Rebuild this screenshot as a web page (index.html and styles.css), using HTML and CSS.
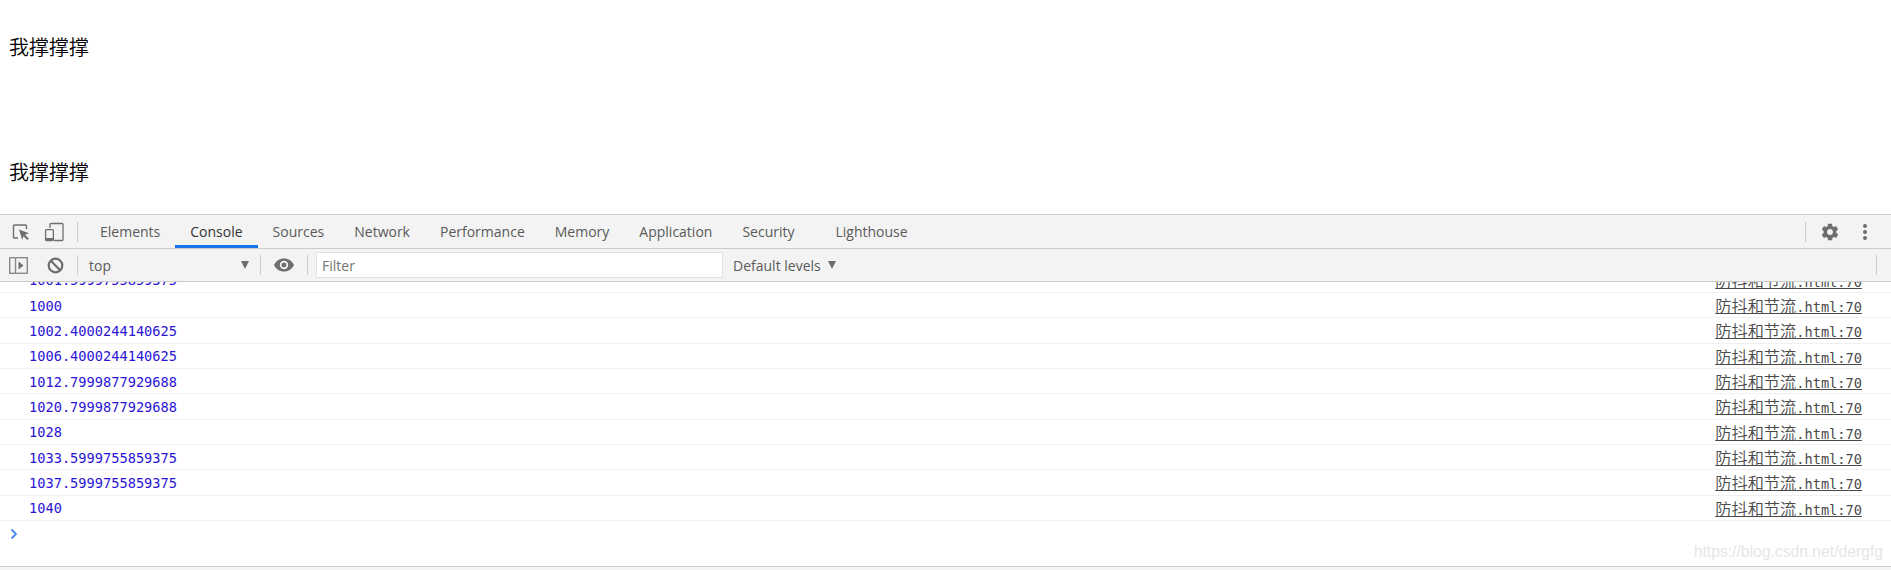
FILE: index.html
```html
<!DOCTYPE html>
<html lang="zh">
<head>
<meta charset="utf-8">
<title>防抖和节流</title>
<link rel="stylesheet" href="styles.css">
</head>
<body>
<main class="page">
  <p class="para">我撑撑撑</p>
  <p class="para">我撑撑撑</p>
</main>
<section class="devtools">
  <div class="tabbar">
    <svg class="ico ico-inspect" width="18" height="18" viewBox="0 0 18 18"><path d="M6 15H2.5a1 1 0 0 1-1-1V3a1 1 0 0 1 1-1h11a1 1 0 0 1 1 1v3" fill="none" stroke="#6e6e6e" stroke-width="1.4"/><path d="M7 6.5l10 3.7-4 1.6 3.8 3.8-1.5 1.5-3.8-3.8-1.3 3.8z" fill="#6e6e6e"/></svg>
    <svg class="ico ico-device" width="20" height="20" viewBox="0 0 20 20"><path d="M6 6V2.5a1 1 0 0 1 1-1h11a1 1 0 0 1 1 1v15a1 1 0 0 1-1 1H10" fill="none" stroke="#6e6e6e" stroke-width="1.3"/><rect x="1.6" y="7.6" width="7.8" height="11" rx="1" fill="none" stroke="#6e6e6e" stroke-width="1.3"/><rect x="2" y="16" width="7" height="2.5" fill="#6e6e6e"/></svg>
    <span class="sep"></span>
    <nav class="tabs">
      <span class="tab">Elements</span>
      <span class="tab tab-active">Console</span>
      <span class="tab">Sources</span>
      <span class="tab">Network</span>
      <span class="tab">Performance</span>
      <span class="tab">Memory</span>
      <span class="tab">Application</span>
      <span class="tab">Security</span>
      <span class="tab tab-last">Lighthouse</span>
    </nav>
    <span class="sep sep-right"></span>
    <svg class="ico ico-gear" width="20" height="20" viewBox="0 0 24 24"><path fill="#6e6e6e" d="M19.4 13c.04-.32.07-.66.07-1s-.03-.68-.07-1l2.1-1.65c.2-.15.25-.42.12-.64l-2-3.46c-.12-.22-.38-.3-.6-.22l-2.5 1c-.52-.4-1.08-.73-1.7-.98l-.37-2.65A.5.5 0 0 0 14 2h-4a.5.5 0 0 0-.5.42l-.37 2.65c-.62.25-1.18.59-1.7.98l-2.5-1a.5.5 0 0 0-.6.22l-2 3.46c-.13.22-.07.49.12.64L4.57 11c-.04.32-.07.66-.07 1s.03.68.07 1l-2.1 1.65c-.2.15-.25.42-.12.64l2 3.46c.12.22.38.3.6.22l2.5-1c.52.4 1.08.73 1.7.98l.37 2.65c.05.24.26.42.5.42h4c.24 0 .45-.18.5-.42l.37-2.65c.62-.25 1.18-.59 1.7-.98l2.5 1c.22.08.48 0 .6-.22l2-3.46a.5.5 0 0 0-.12-.64L19.4 13zM12 15.5a3.5 3.5 0 1 1 0-7 3.5 3.5 0 0 1 0 7z"/></svg>
    <svg class="ico ico-dots" width="6" height="18" viewBox="0 0 6 18"><circle cx="3" cy="3" r="2" fill="#6e6e6e"/><circle cx="3" cy="9" r="2" fill="#6e6e6e"/><circle cx="3" cy="15" r="2" fill="#6e6e6e"/></svg>
  </div>
  <div class="toolbar">
    <svg class="ico ico-sidebar" width="19" height="17" viewBox="0 0 19 17"><rect x=".7" y=".7" width="17.6" height="15.6" fill="none" stroke="#8a8a8a" stroke-width="1.4"/><path d="M6.5 1v15" stroke="#8a8a8a" stroke-width="1.4"/><path d="M9.5 4.500l5 4-5 4z" fill="#6e6e6e"/></svg>
    <svg class="ico ico-clear" width="17" height="17" viewBox="0 0 17 17"><circle cx="8.5" cy="8.5" r="6.8" fill="none" stroke="#6e6e6e" stroke-width="2.2"/><path d="M3.8 3.8l9.4 9.4" stroke="#6e6e6e" stroke-width="2.2"/></svg>
    <span class="sep sep-tall"></span>
    <span class="context">top</span>
    <span class="caret caret-context"></span>
    <span class="sep sep-tall sep-eye"></span>
    <svg class="ico ico-eye" width="20" height="14" viewBox="0 0 20 14"><path fill="#6e6e6e" d="M10 .5C5.500.5 1.700 3.200 0 7c1.700 3.800 5.500 6.500 10 6.500S18.300 10.800 20 7C18.300 3.200 14.500.5 10 .5zM10 11.200A4.200 4.200 0 1 1 10 2.800a4.200 4.200 0 0 1 0 8.400zM10 4.500a2.500 2.500 0 1 0 0 5 2.500 2.500 0 0 0 0-5z"/></svg>
    <span class="sep sep-tall sep-filter"></span>
    <div class="filter">Filter</div>
    <span class="levels">Default levels</span>
    <span class="caret caret-levels"></span>
    <span class="sep sep-tall sep-end"></span>
  </div>
  <div class="console">
    <div class="rows">
      <div class="row row-cut"><span class="num">1001.5999755859375</span><a class="src"><span class="cjk">防抖和节流</span>.html:70</a></div>
      <div class="row"><span class="num">1000</span><a class="src"><span class="cjk">防抖和节流</span>.html:70</a></div>
      <div class="row"><span class="num">1002.4000244140625</span><a class="src"><span class="cjk">防抖和节流</span>.html:70</a></div>
      <div class="row"><span class="num">1006.4000244140625</span><a class="src"><span class="cjk">防抖和节流</span>.html:70</a></div>
      <div class="row"><span class="num">1012.7999877929688</span><a class="src"><span class="cjk">防抖和节流</span>.html:70</a></div>
      <div class="row"><span class="num">1020.7999877929688</span><a class="src"><span class="cjk">防抖和节流</span>.html:70</a></div>
      <div class="row"><span class="num">1028</span><a class="src"><span class="cjk">防抖和节流</span>.html:70</a></div>
      <div class="row"><span class="num">1033.5999755859375</span><a class="src"><span class="cjk">防抖和节流</span>.html:70</a></div>
      <div class="row"><span class="num">1037.5999755859375</span><a class="src"><span class="cjk">防抖和节流</span>.html:70</a></div>
      <div class="row"><span class="num">1040</span><a class="src"><span class="cjk">防抖和节流</span>.html:70</a></div>
    </div>
    <div class="prompt">
      <svg class="ico" width="8" height="12" viewBox="0 0 8 12"><path d="M1.500 1.500L6 6l-4.500 4.500" fill="none" stroke="#4a86f0" stroke-width="1.800"/></svg>
    </div>
  </div>
  <div class="statusbar"></div>
  <span class="watermark">https://blog.csdn.net/dergfg</span>
</section>
</body>
</html>
```
FILE: styles.css
```css
* { box-sizing: border-box; }
html, body { margin: 0; padding: 0; }
body {
  width: 1891px;
  height: 570px;
  overflow: hidden;
  background: #fff;
  display: flex;
  flex-direction: column;
  font-family: "Open Sans", "Noto Sans", sans-serif;
}
.page {
  height: 214px;
  padding: 33px 8px 0 9px;
  display: flex;
  flex-direction: column;
  gap: 98px;
}
.para {
  margin: 0;
  font: 350 20px/27px "Noto Sans CJK SC", sans-serif;
  color: #000;
}
.devtools {
  position: relative;
  flex: 1;
  display: flex;
  flex-direction: column;
  min-height: 0;
}
.ico { flex: none; display: block; }
.tabbar, .toolbar {
  flex: none;
  display: flex;
  align-items: center;
  background: #f3f3f3;
  color: #5a5a5a;
  font-size: 14px;
}
.tabbar {
  height: 35px;
  border-top: 1px solid #ccc;
  border-bottom: 1px solid #ccc;
}
.toolbar {
  height: 33px;
  border-bottom: 1px solid #ccc;
}
.sep {
  flex: none;
  width: 1px;
  height: 20px;
  background: #ccc;
}
.ico-inspect { margin-left: 12px; }
.ico-device { margin-left: 14px; }
.tabbar > .sep { margin-left: 13px; }
.tabs {
  display: flex;
  align-self: stretch;
  margin-left: 7px;
}
.tab {
  display: flex;
  align-items: center;
  padding: 0 15px;
  border-bottom: 3px solid transparent;
  border-top: 3px solid transparent;
}
.tab-active {
  color: #333;
  border-bottom-color: #1a73e8;
}
.tab-last { margin-left: 11px; }
.tabbar > .sep-right { margin-left: auto; }
.ico-gear { margin-left: 14px; }
.ico-dots { margin-left: 22px; margin-right: 23px; }
.ico-sidebar { margin-left: 9px; }
.ico-clear { margin-left: 19px; }
.sep-tall { height: 20px; margin-left: 13px; }
.context { margin-left: 11px; width: 152px; padding-top: 1px; }
.caret {
  flex: none;
  width: 0;
  height: 0;
  border-left: 4.5px solid transparent;
  border-right: 4.5px solid transparent;
  border-top: 8px solid #6e6e6e;
}
.sep-eye { margin-left: 11px; }
.ico-eye { margin-left: 13px; }
.sep-filter { margin-left: 13px; }
.filter {
  flex: none;
  width: 407px;
  height: 26px;
  margin-left: 8px;
  padding-left: 5px;
  padding-top: 1px;
  background: #fff;
  border: 1px solid #e2e2e2;
  line-height: 24px;
  color: #757575;
}
.levels { margin-left: 10px; padding-top: 1px; }
.caret-levels { margin-left: 7px; }
.sep-end { margin-left: auto; margin-right: 14px; }
.console {
  flex: 1;
  min-height: 0;
  overflow: hidden;
  background: #fff;
}
.row {
  height: 25.33px;
  display: flex;
  align-items: center;
  justify-content: space-between;
  padding: 0 29px;
  border-bottom: 1px solid #f0f0f0;
  font: 13.66px "DejaVu Sans Mono", "Liberation Mono", monospace;
}
.row-cut { margin-top: -14.33px; }
.num { color: #2a14d6; padding-top: 1px; }
.src {
  color: #4a4a4a;
  text-decoration: underline;
  white-space: nowrap;
}
.cjk { font: 350 16.2px "Noto Sans CJK SC", sans-serif; }
.prompt {
  padding: 7px 0 0 10px;
}
.statusbar {
  flex: none;
  height: 4px;
  background: #f3f3f3;
  border-top: 1px solid #ccc;
}
.watermark {
  position: absolute;
  right: 8px;
  top: 328px;
  font: 15.7px/20px "Liberation Sans", sans-serif;
  color: #e6e6e6;
}
```
